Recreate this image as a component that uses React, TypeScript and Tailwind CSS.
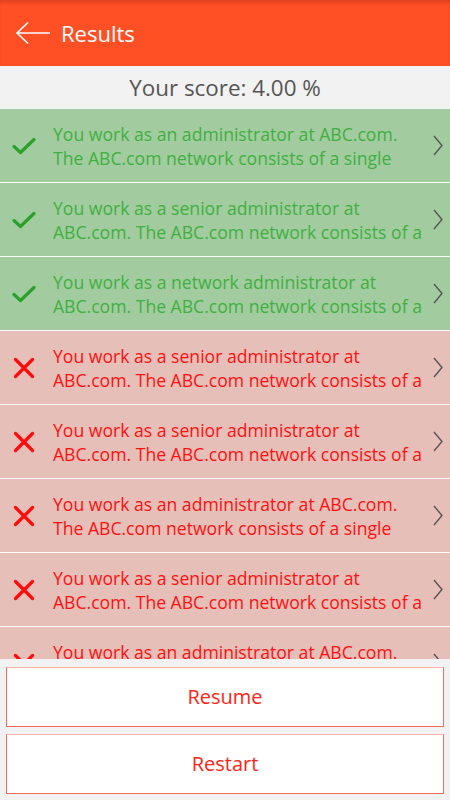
import React from 'react'

type Row = { ok: boolean; lines: [string, string] }

const ROWS: Row[] = [
  { ok: true, lines: ['You work as an administrator at ABC.com.', 'The ABC.com network consists of a single'] },
  { ok: true, lines: ['You work as a senior administrator at', 'ABC.com. The ABC.com network consists of a'] },
  { ok: true, lines: ['You work as a network administrator at', 'ABC.com. The ABC.com network consists of a'] },
  { ok: false, lines: ['You work as a senior administrator at', 'ABC.com. The ABC.com network consists of a'] },
  { ok: false, lines: ['You work as a senior administrator at', 'ABC.com. The ABC.com network consists of a'] },
  { ok: false, lines: ['You work as an administrator at ABC.com.', 'The ABC.com network consists of a single'] },
  { ok: false, lines: ['You work as a senior administrator at', 'ABC.com. The ABC.com network consists of a'] },
  { ok: false, lines: ['You work as an administrator at ABC.com.', 'The ABC.com network consists of a single'] },
]

function CheckIcon() {
  return (
    <svg width="24" height="18" viewBox="0 0 24 18">
      <path d="M2 9.5 L8.5 15.5 L22 2.5" fill="none" stroke="#2ba12b" strokeWidth="3.2" strokeLinecap="round" strokeLinejoin="round" />
    </svg>
  )
}

function CrossIcon() {
  return (
    <svg width="22" height="22" viewBox="0 0 22 22">
      <path d="M2.5 2.5 L19.5 19.5 M19.5 2.5 L2.5 19.5" fill="none" stroke="#ff0a0a" strokeWidth="3.2" strokeLinecap="round" />
    </svg>
  )
}

function Chevron() {
  return (
    <svg width="10" height="21" viewBox="0 0 10 21">
      <path d="M1 1 L9 10.5 L1 20" fill="none" stroke="#555" strokeWidth="1.4" />
    </svg>
  )
}

export default function App() {
  return (
    <div
      className="w-[450px] h-[800px] flex flex-col bg-[#f2f2f2] overflow-hidden"
      style={{ fontFamily: '"Open Sans", "Noto Sans", sans-serif' }}
    >
      <header className="h-[67px] shrink-0 flex items-center bg-[#ff4f25] border-b border-[#f2f2f2] shadow-[inset_0_4px_4px_-2px_rgba(0,0,0,0.18)]">
        <div className="pl-[15px] pr-[10px] flex items-center">
          <svg width="36" height="24" viewBox="0 0 36 24">
            <path d="M35 12 H2 M13 1.5 L2 12 L13 22.5" fill="none" stroke="#fff" strokeWidth="1.6" />
          </svg>
        </div>
        <span className="text-white text-[22px] leading-none pb-[1px]">Results</span>
      </header>

      <div className="h-[42px] shrink-0 flex items-center justify-center text-[22.4px] text-[#555]">
        Your score: 4.00 %
      </div>

      <div className="flex-1 overflow-hidden">
        {ROWS.map((row, i) => (
          <div
            key={i}
            className={`h-[74px] flex items-center border-b-[1.5px] border-white ${
              row.ok ? 'bg-[#a2cc9f]' : 'bg-[#e6bfb9]'
            }`}
          >
            <div className="w-[53px] shrink-0 flex justify-center pr-[6px]">
              {row.ok ? <CheckIcon /> : <CrossIcon />}
            </div>
            <div
              className={`flex-1 text-[17.6px] leading-[24px] h-[48px] overflow-hidden whitespace-nowrap ${
                row.ok ? 'text-[#3fb03f]' : 'text-[#ff1010]'
              }`}
            >
              <div>{row.lines[0]}</div>
              <div>{row.lines[1]}</div>
            </div>
            <div className="w-[28px] shrink-0 flex justify-center pl-[4px]">
              <Chevron />
            </div>
          </div>
        ))}
      </div>

      <div className="shrink-0 bg-[#f2f2f2] px-[6px] pt-[8px] pb-[6px] flex flex-col gap-[7px]">
        <button className="h-[60px] bg-white border border-[#f46b5c] border-t-[#fbb3aa] text-[#ff2414] text-[20px]">
          Resume
        </button>
        <button className="h-[60px] bg-white border border-[#f46b5c] border-t-[#fbb3aa] text-[#ff2414] text-[20px]">
          Restart
        </button>
      </div>
    </div>
  )
}
